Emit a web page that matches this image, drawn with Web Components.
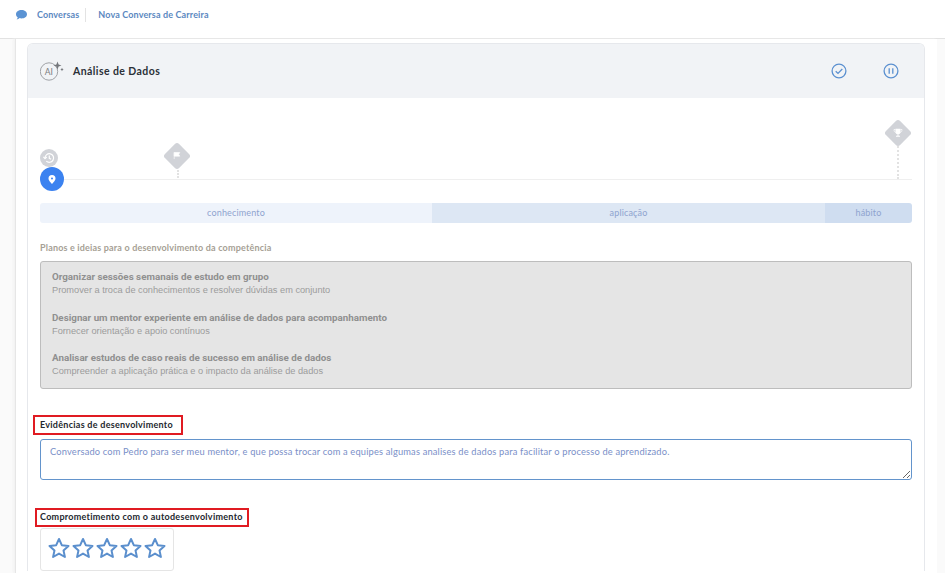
<!DOCTYPE html>
<html lang="pt">
<head>
<meta charset="utf-8">
<title>Nova Conversa de Carreira</title>
<style>
html,body{margin:0;height:573px;overflow:hidden;background:#fff;font-family:"Lato","Noto Sans",sans-serif}
</style>
</head>
<body>
<app-page>
  <app-header slot="header"></app-header>
  <skill-card title-text="Análise de Dados">
    <skill-timeline></skill-timeline>
    <phase-bar></phase-bar>
    <plan-box></plan-box>
    <evidence-field></evidence-field>
    <star-field></star-field>
  </skill-card>
</app-page>
<script>
function def(name, html){
  customElements.define(name, class extends HTMLElement{
    constructor(){super();this.attachShadow({mode:'open'}).innerHTML=html;}
    connectedCallback(){
      const t=this.shadowRoot.querySelector('[data-title]');
      if(t) t.textContent=this.getAttribute('title-text')||'';
    }
  });
}
def('app-page',`<style>
:host{display:flex;flex-direction:column;height:573px;background:#fafafa}
.panel{flex:1;margin:0 8px 0 15px;background:#fff;border-left:1px solid #e6e6e6;padding:4px 12px 0 11px;box-shadow:-2px 0 2px #f3f3f3;min-height:0;overflow:hidden}
</style><slot name="header"></slot><div class="panel"><slot></slot></div>`);
def('app-header',`<style>
:host{display:flex;align-items:flex-start;height:38px;background:#fff;border-bottom:1px solid #e2e2e2;box-sizing:content-box;padding-left:16px;color:#5b88bf;font:700 9px/1 "Lato",sans-serif}
svg{margin-top:10px;display:block}
.a{margin:10px 0 0 10px;line-height:9px;letter-spacing:.12px}
.sep{width:1px;height:14px;background:#e3e3e3;margin:8px 12px 0 6px}
.b{margin-top:10px;line-height:9px;letter-spacing:.14px}
</style>
<svg width="11" height="10" viewBox="0 0 11 10"><path d="M5.5 0C8.6 0 11 1.8 11 4.2S8.6 8.4 5.500 8.400c-.7 0-1.300-.1-1.900-.3C2.900 8.800 1.800 9.500.6 9.600c.6-.7 1-1.500 1.100-2.300C.6 6.600 0 5.500 0 4.200 0 1.800 2.400 0 5.500 0z" fill="#5b93d3"/></svg>
<span class="a">Conversas</span><span class="sep"></span><span class="b">Nova Conversa de Carreira</span>`);
def('skill-card',`<style>
:host{display:block;border:1px solid #e6e8ec;border-bottom:0;border-radius:6px 6px 0 0;background:#fff;width:896px}
.head{height:54px;background:#f1f3f6;border-radius:5px 5px 0 0;display:flex;align-items:center;padding:0 25px 0 12px}
.title{font:700 10.500px/1 "Lato",sans-serif;color:#2b3038;margin-left:9px;letter-spacing:.42px;flex:1}
.ic{display:block}
.check{margin-right:36px}
</style>
<div class="head">
<svg class="ic" width="24" height="20" viewBox="0 0 24 20"><circle cx="9" cy="10.500" r="8.700" fill="none" stroke="#96999d" stroke-width=".9"/><text x="8.800" y="13.600" text-anchor="middle" font-family="Lato,sans-serif" font-size="8.500" fill="#7a7c80">AI</text><path d="M17.500 .5l1.100 2.900 2.900 1.100-2.900 1.100-1.100 2.900-1.100-2.900-2.900-1.100 2.900-1.100zM22 6.800l.6 1.100 1.100.6-1.100.6-.6 1.100-.6-1.100-1.100-.6 1.100-.6z" fill="#74777c"/></svg>
<span class="title" data-title></span>
<svg class="ic check" width="16" height="16" viewBox="0 0 16 16" fill="none" stroke="#5b90d0" stroke-width="1.300"><circle cx="8" cy="8" r="6.900"/><path d="M4.700 8.200l2.300 2.200 4.300-4.400"/></svg>
<svg class="ic" width="16" height="16" viewBox="0 0 16 16" fill="none" stroke="#5b90d0" stroke-width="1.300"><circle cx="8" cy="8" r="6.900"/><path d="M6.200 5.200v5.600M9.800 5.200v5.600"/></svg>
</div><div style="padding:0 12px"><slot></slot></div>`);
def('skill-timeline',`<style>
:host{display:block;position:relative;height:105px}
.line{position:absolute;left:12px;right:0;top:81px;height:1px;background:#efefef}
.cur,.hist{position:absolute;border-radius:50%;display:flex;align-items:center;justify-content:center}
.hist{left:0;top:51px;width:18px;height:18px;background:#d1d3d8}
.cur{left:0;top:69px;width:24px;height:24px;background:#3b82f0}
.d{position:absolute;width:20px;height:20px;background:#d1d3d8;border-radius:3px;transform:rotate(45deg);}
.g{position:absolute;display:block}
.dash{position:absolute;width:0;border-left:2px dotted #e2e2e2}
</style>
<div class="line"></div>
<div class="dash" style="left:137px;top:72px;height:8px"></div>
<div class="dash" style="left:857px;top:45px;height:36px"></div>
<div class="hist"><svg width="12" height="12" viewBox="0 0 12 12" fill="none" stroke="#fff" stroke-width="1.200"><path d="M2 6a4.300 4.300 0 1 1 1.300 3.100"/><path d="M.4 4.800L2 6.600l1.700-1.600"/><path d="M6.300 3.500v2.800l1.800 1"/></svg></div>
<div class="cur"><svg width="8" height="9" viewBox="0 0 8 9"><path fill-rule="evenodd" d="M4 0a3.500 3.500 0 0 1 3.500 3.500C7.500 5.800 4 9 4 9S.5 5.800.5 3.500A3.500 3.500 0 0 1 4 0zm0 2.500a1 1 0 1 0 0 2 1 1 0 0 0 0-2z" fill="#fff"/></svg></div>
<div class="d" style="left:127px;top:48px"></div>
<svg class="g" style="left:133px;top:53px" width="8" height="9" viewBox="0 0 10 10"><path d="M1.500 1v8.500M1.500 1.300h7L7 3.500l1.500 2.300h-7z" fill="#fff" stroke="#fff" stroke-width=".8"/></svg>
<div class="d" style="left:848px;top:25px"></div>
<svg class="g" style="left:853px;top:30px" width="10" height="10" viewBox="0 0 10 10"><path d="M2.500 .8h5v3a2.500 2.500 0 0 1-5 0zM4.500 6h1v1.800H7v1H3v-1h1.500z" fill="#fff"/><path d="M2.500 1.500H1c0 1.800.6 2.600 1.800 3M7.500 1.500H9c0 1.800-.6 2.600-1.800 3" fill="none" stroke="#fff" stroke-width=".7"/></svg>`);
def('phase-bar',`<style>
:host{display:grid;grid-template-columns:392px 393px 87px;height:20px;border-radius:3px;overflow:hidden;font:400 9px/20px "Lato",sans-serif;color:#8ea3cf;text-align:center;letter-spacing:.15px}
.p1{background:#eef3fb}.p2{background:#dde7f4}.p3{background:#cfddf0}
</style><div class="p1">conhecimento</div><div class="p2">aplicação</div><div class="p3">hábito</div>`);
def('plan-box',`<style>
:host{display:block;margin-top:19px}
.t{font:700 9px/11px "Lato",sans-serif;color:#a69f95;letter-spacing:.18px}
.box{margin-top:8px;height:128px;border:1px solid #bdbdbd;border-radius:3px;background:#e5e5e5;padding:8px 11px 0;color:#9c9c9c;font:400 9px/13px "Liberation Sans",Arial,sans-serif;box-sizing:border-box}
p{margin:0 0 13.500px}
b{display:block;font:700 9.800px/14px "Roboto","Liberation Sans",sans-serif;color:#909090}
span{display:block;font-size:9.220px}
</style><div class="t">Planos e ideias para o desenvolvimento da competência</div>
<div class="box">
<p><b>Organizar sessões semanais de estudo em grupo</b><span>Promover a troca de conhecimentos e resolver dúvidas em conjunto</span></p>
<p><b>Designar um mentor experiente em análise de dados para acompanhamento</b><span>Fornecer orientação e apoio contínuos</span></p>
<p><b>Analisar estudos de caso reais de sucesso em análise de dados</b><span>Compreender a aplicação prática e o impacto da análise de dados</span></p>
</div>`);
def('evidence-field',`<style>
:host{display:block;margin-top:26px}
.l{display:inline-block;margin-left:-7px;border:2px solid #e01b22;padding:0 8px 0 5px;height:16px;font:700 9px/16px "Lato",sans-serif;color:#23272e;letter-spacing:.27px;vertical-align:top}
.ta{margin-top:4px;height:25px;box-sizing:content-box;border:1px solid #6394cc;border-radius:3px;padding:6px 9px 8px;font:400 9.300px/12px "Lato",sans-serif;color:#7a8fc8;letter-spacing:.17px;resize:vertical;overflow:hidden;width:852px}
</style><div class="l">Evidências de desenvolvimento</div>
<div class="ta">Conversado com Pedro para ser meu mentor, e que possa trocar com a equipes algumas analises de dados para facilitar o processo de aprendizado.</div>`);
def('star-field',`<style>
:host{display:block;margin-top:28px}
.l{display:inline-block;margin-left:-5px;border:2px solid #e01b22;padding:0 4px 0 3px;height:15px;font:700 9px/13px "Lato",sans-serif;color:#23272e;letter-spacing:.28px;vertical-align:top}
.s{margin-top:1px;width:132px;height:41px;border:1px solid #e5e5e5;border-radius:3px;display:flex;align-items:flex-start;box-sizing:content-box}
svg{display:block;width:24px;height:24px;flex:none;margin-top:7px}
svg:first-child{margin-left:6px}
</style><div class="l">Comprometimento com o autodesenvolvimento</div>
<div class="s">${'<svg viewBox="0 0 24 24" fill="none" stroke="#5b8fcd" stroke-width="2" stroke-linejoin="round"><path d="M12 3l2.800 6.200 6.700.7-5 4.500 1.400 6.600L12 17.600 6.100 21l1.400-6.600-5-4.500 6.700-.7z"/></svg>'.repeat(5)}</div>`);
</script>
</body>
</html>
